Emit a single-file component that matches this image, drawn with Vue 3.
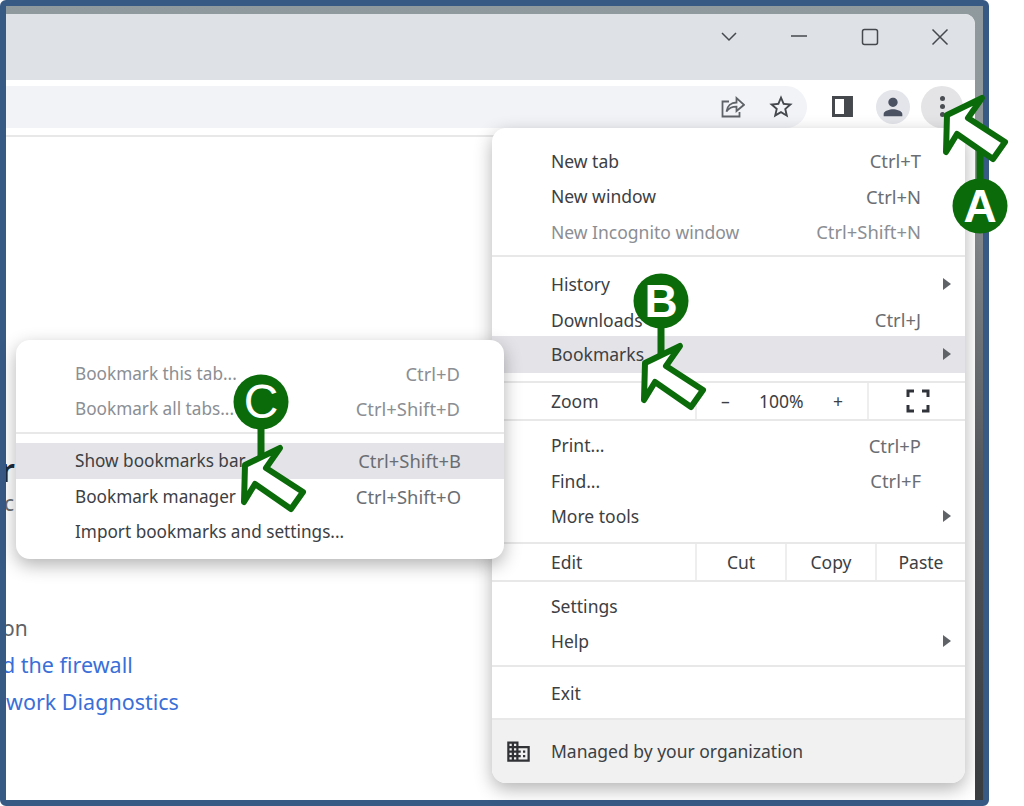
<script setup>
const mainTop = [
  { label: 'New tab', keys: 'Ctrl+T' },
  { label: 'New window', keys: 'Ctrl+N' },
  { label: 'New Incognito window', keys: 'Ctrl+Shift+N', off: true }
]
const mainHistory = [
  { label: 'History', more: true },
  { label: 'Downloads', keys: 'Ctrl+J' },
  { label: 'Bookmarks', more: true, active: true }
]
const mainTools = [
  { label: 'Print...', keys: 'Ctrl+P' },
  { label: 'Find...', keys: 'Ctrl+F' },
  { label: 'More tools', more: true }
]
const mainHelp = [
  { label: 'Settings' },
  { label: 'Help', more: true }
]
const subTop = [
  { label: 'Bookmark this tab...', keys: 'Ctrl+D', off: true },
  { label: 'Bookmark all tabs...', keys: 'Ctrl+Shift+D', off: true }
]
const subBottom = [
  { label: 'Show bookmarks bar', keys: 'Ctrl+Shift+B', active: true },
  { label: 'Bookmark manager', keys: 'Ctrl+Shift+O' },
  { label: 'Import bookmarks and settings...' }
]

// Each callout: badge centre, arrow tip, and the connector line
const callouts = [
  { letter: 'A', cx: 980, cy: 206, tip: [947, 115], line: [980, 150, 980, 182], bold: true },
  { letter: 'B', cx: 661, cy: 301, tip: [645, 363], line: [661, 325, 661, 358], bold: true },
  { letter: 'C', cx: 261, cy: 402, tip: [245, 465], line: [261, 425, 261, 460], bold: false }
]
const arrowShape = '0,0 35,-17 21,3 58,27 46,44 10,19 -1,37'
</script>

<template>
  <div class="page">
    <div class="frame">
      <div class="window">
        <div class="titlebar">
          <svg class="win-icon" viewBox="0 0 20 20"><path d="M3 6l7 7 7-7" /></svg>
          <svg class="win-icon" viewBox="0 0 20 20"><path d="M2 9h16" /></svg>
          <svg class="win-icon" viewBox="0 0 20 20"><rect x="2.5" y="2.5" width="15" height="15" rx="2" /></svg>
          <svg class="win-icon" viewBox="0 0 20 20"><path d="M2.5 2.5l15 15M17.5 2.5l-15 15" /></svg>
        </div>

        <div class="toolbar">
          <div class="omnibox">
            <svg class="share" viewBox="0 0 24 24">
              <path d="M8 6.5H1.5v15h17V17" />
              <path d="M5.5 16.5c.6-5.500 4.600-9 10-9V3l7.500 6.800-7.500 6.200v-4.300c-4.500 0-7.500 1.200-10 4.800z" />
            </svg>
            <svg class="star" viewBox="0 0 24 24">
              <path d="M22 9.240l-7.190-.62L12 2 9.190 8.630 2 9.240l5.460 4.730L5.820 21 12 17.270 18.180 21l-1.630-7.030L22 9.240zM12 15.400l-3.760 2.270 1-4.280-3.320-2.880 4.380-.38L12 6.100l1.710 4.040 4.380.38-3.320 2.880 1 4.280L12 15.400z" />
            </svg>
          </div>
          <svg class="panel" viewBox="0 0 21 21">
            <path fill-rule="evenodd" d="M0 0h21v21H0zM3 3v15h9V3z" />
          </svg>
          <div class="avatar">
            <svg viewBox="0 0 24 24">
              <path d="M12 12c2.210 0 4-1.790 4-4s-1.790-4-4-4-4 1.790-4 4 1.790 4 4 4zm0 2c-2.670 0-8 1.340-8 4v2h16v-2c0-2.660-5.330-4-8-4z" />
            </svg>
          </div>
          <div class="dots"><i></i><i></i><i></i></div>
        </div>

        <div class="content">
          <div class="heading">r</div>
          <div class="sub-line">c</div>
          <div class="try">on</div>
          <a class="link first">d the firewall</a>
          <a class="link">work Diagnostics</a>
        </div>
      </div>
    </div>

    <!-- Chrome main menu -->
    <div class="menu main-menu">
      <div class="section top">
        <div v-for="row in mainTop" :key="row.label" class="row" :class="{ off: row.off }">
          <span>{{ row.label }}</span><span class="keys">{{ row.keys }}</span>
        </div>
      </div>
      <div class="section hist">
        <div v-for="row in mainHistory" :key="row.label" class="row" :class="{ active: row.active }">
          <span>{{ row.label }}</span>
          <span v-if="row.keys" class="keys">{{ row.keys }}</span>
          <i v-if="row.more" class="caret"></i>
        </div>
      </div>
      <div class="section cells zoom">
        <span class="cell-label">Zoom</span>
        <div class="zoom-ctl"><span>–</span><span class="pct">100%</span><span>+</span></div>
        <div class="full">
          <svg viewBox="0 0 24 24"><path d="M2 8V2h6M16 2h6v6M22 16v6h-6M8 22H2v-6" /></svg>
        </div>
      </div>
      <div class="section tools">
        <div v-for="row in mainTools" :key="row.label" class="row">
          <span>{{ row.label }}</span>
          <span v-if="row.keys" class="keys">{{ row.keys }}</span>
          <i v-if="row.more" class="caret"></i>
        </div>
      </div>
      <div class="section cells edit">
        <span class="cell-label">Edit</span>
        <div class="edit-btn">Cut</div>
        <div class="edit-btn">Copy</div>
        <div class="edit-btn">Paste</div>
      </div>
      <div class="section help">
        <div v-for="row in mainHelp" :key="row.label" class="row">
          <span>{{ row.label }}</span>
          <i v-if="row.more" class="caret"></i>
        </div>
      </div>
      <div class="section exit">
        <div class="row"><span>Exit</span></div>
      </div>
      <div class="managed">
        <svg viewBox="0 0 24 24">
          <path d="M12 7V3H2v18h20V7H12zM6 19H4v-2h2v2zm0-4H4v-2h2v2zm0-4H4V9h2v2zm0-4H4V5h2v2zm4 12H8v-2h2v2zm0-4H8v-2h2v2zm0-4H8V9h2v2zm0-4H8V5h2v2zm10 12h-8v-2h2v-2h-2v-2h2v-2h-2V9h8v10zm-2-8h-2v2h2v-2zm0 4h-2v2h2v-2z" />
        </svg>
        <span>Managed by your organization</span>
      </div>
    </div>

    <!-- Bookmarks submenu -->
    <div class="menu sub-menu">
      <div class="section sub-top">
        <div v-for="row in subTop" :key="row.label" class="row off">
          <span>{{ row.label }}</span><span class="keys">{{ row.keys }}</span>
        </div>
      </div>
      <div class="sub-bottom">
        <div v-for="row in subBottom" :key="row.label" class="row" :class="{ active: row.active }">
          <span>{{ row.label }}</span>
          <span v-if="row.keys" class="keys">{{ row.keys }}</span>
        </div>
      </div>
    </div>

    <!-- Green step callouts drawn over the screenshot -->
    <svg class="callouts" viewBox="0 0 1024 806">
      <g v-for="c in callouts" :key="c.letter">
        <line :x1="c.line[0]" :y1="c.line[1]" :x2="c.line[2]" :y2="c.line[3]" class="stem" />
        <polygon :points="arrowShape" :transform="`translate(${c.tip[0]} ${c.tip[1]})`" class="arrow" />
        <circle :cx="c.cx" :cy="c.cy" r="27.500" class="badge" />
        <text :x="c.cx" :y="c.cy + 16" class="letter" :class="{ thin: !c.bold }">{{ c.letter }}</text>
      </g>
    </svg>
  </div>
</template>

<style scoped>
.page {
  position: relative;
  width: 1024px;
  height: 806px;
  overflow: hidden;
  background: #fff;
  font-family: "Noto Sans", "Open Sans", sans-serif;
  color: #3c4043;
}

.frame {
  box-sizing: border-box;
  width: 989px;
  height: 806px;
  padding: 8px 8px 0 0;
  border: 6px solid #375a85;
  border-radius: 6px;
  background: linear-gradient(#8f9a9e, #8f9598 20%, #53575b 60%, #3a3d40);
}

.window {
  display: flex;
  flex-direction: column;
  height: 100%;
  background: #fff;
  border-top-right-radius: 10px;
  overflow: hidden;
}

.titlebar {
  display: flex;
  align-items: center;
  justify-content: flex-end;
  gap: 50.500px;
  height: 66px;
  flex: none;
  padding: 0 25px 21px 0;
  box-sizing: border-box;
  background: #dee1e6;
}

.win-icon {
  width: 20px;
  height: 20px;
  fill: none;
  stroke: #45484d;
  stroke-width: 1.500;
}

.toolbar {
  display: flex;
  align-items: center;
  flex: none;
  height: 57px;
  box-sizing: border-box;
  padding: 0 12px 2px 0;
  border-bottom: 2px solid #e8e8e8;
}

.omnibox {
  display: flex;
  align-items: center;
  justify-content: flex-end;
  gap: 22px;
  width: 802px;
  height: 42px;
  box-sizing: border-box;
  padding-right: 12px;
  background: #f2f3f7;
  border-radius: 0 21px 21px 0;
}

.share {
  width: 24px;
  height: 24px;
  fill: none;
  stroke: #5f6368;
  stroke-width: 1.800;
}

.star {
  width: 28px;
  height: 28px;
  fill: #45484d;
}

.panel {
  width: 21px;
  height: 21px;
  margin-left: 25px;
  fill: #45484d;
}

.avatar {
  display: flex;
  align-items: center;
  justify-content: center;
  width: 34px;
  height: 34px;
  margin-left: 23px;
  border-radius: 50%;
  background: #e3e5ea;
}

.avatar svg {
  width: 28px;
  height: 28px;
  fill: #4b5262;
}

.dots {
  display: flex;
  flex-direction: column;
  align-items: center;
  justify-content: center;
  gap: 3px;
  width: 42px;
  height: 42px;
  margin-left: 11px;
  border-radius: 50%;
  background: #e4e4e6;
}

.dots i {
  width: 5px;
  height: 5px;
  border-radius: 50%;
  background: #4a4d52;
}

.content {
  display: flex;
  flex-direction: column;
  align-items: flex-start;
  flex: 1;
  padding-top: 314px;
  font-size: 21.500px;
  line-height: 37px;
  white-space: nowrap;
}

.heading {
  height: 37px;
  margin-left: -5px;
  font-size: 32px;
  font-weight: 600;
  color: #1c2a3d;
}

.sub-line {
  margin-left: -2px;
  margin-top: -3px;
  font-size: 21px;
  color: #6a6d72;
}

.try {
  margin-top: 88px;
  margin-left: -4px;
  font-size: 21px;
  color: #5f6368;
}

.link {
  color: #3a6fd8;
}

.first {
  margin-top: -1px;
  margin-left: -4px;
}

.menu {
  position: absolute;
  box-sizing: border-box;
  display: flex;
  flex-direction: column;
  background: #fff;
  border-radius: 14px;
  box-shadow: 0 6px 18px rgba(0, 0, 0, 0.3);
  font-size: 17.500px;
}

.main-menu {
  left: 492px;
  top: 128px;
  width: 473px;
  height: 655px;
}

.sub-menu {
  left: 16px;
  top: 340px;
  width: 488px;
  height: 219px;
  font-size: 17.200px;
}

.row {
  display: flex;
  align-items: center;
  justify-content: space-between;
  position: relative;
  height: 35.500px;
  padding: 0 44px 0 59px;
}

.row.active {
  background: #e4e4e8;
}

.row.off,
.row.off .keys {
  color: #8b8e93;
}

.keys {
  font-size: 18.400px;
  color: #6a6d72;
}

.caret {
  position: absolute;
  right: 14px;
  top: 50%;
  margin-top: -6px;
  border-left: 8px solid #5f6368;
  border-top: 6px solid transparent;
  border-bottom: 6px solid transparent;
}

.section {
  box-sizing: border-box;
  border-bottom: 2px solid #e8e8e8;
}

.top {
  height: 128.500px;
  padding-top: 15px;
}

.hist {
  height: 126px;
  padding-top: 10px;
}

.hist .active {
  height: 37px;
  margin-top: -2px;
}

.cells {
  display: flex;
  align-items: stretch;
  flex: none;
}

.cell-label {
  display: flex;
  align-items: center;
  width: 205px;
  box-sizing: border-box;
  padding-left: 59px;
  border-right: 2px solid #eee;
}

.zoom {
  height: 38px;
}

.zoom-ctl {
  display: flex;
  align-items: center;
  justify-content: space-between;
  width: 172px;
  box-sizing: border-box;
  padding: 0 24px 0 24px;
  border-right: 2px solid #eee;
}

.pct {
  font-size: 17.500px;
}

.full {
  display: flex;
  flex: 1;
  align-items: center;
  justify-content: center;
  padding-left: 2px;
}

.full svg {
  width: 24px;
  height: 24px;
  fill: none;
  stroke: #30343a;
  stroke-width: 3;
}

.tools {
  height: 123px;
  padding-top: 7px;
}

.edit {
  height: 38px;
}

.edit-btn {
  display: flex;
  flex: 1;
  align-items: center;
  justify-content: center;
  border-right: 2px solid #eee;
}

.edit-btn:last-child {
  border-right: 0;
}

.help {
  height: 85px;
  padding-top: 7px;
}

.help .row {
  height: 35px;
}

.exit {
  height: 53px;
  padding-top: 9px;
}

.managed {
  display: flex;
  flex: 1;
  align-items: center;
  gap: 19px;
  padding-left: 13px;
  background: #f1f1f1;
  border-radius: 0 0 14px 14px;
}

.managed svg {
  width: 27px;
  height: 27px;
  fill: #303236;
}

.sub-top {
  height: 94px;
  padding-top: 15.500px;
}

.sub-top .row {
  height: 35px;
}

.sub-bottom {
  padding-top: 9px;
}

.sub-bottom .row {
  padding-right: 43px;
}

.callouts {
  position: absolute;
  left: 0;
  top: 0;
  width: 1024px;
  height: 806px;
  pointer-events: none;
}

.stem {
  stroke: #0b6b0b;
  stroke-width: 7;
}

.arrow {
  fill: #fff;
  stroke: #0b6b0b;
  stroke-width: 6;
  stroke-linejoin: round;
}

.badge {
  fill: #0b6b0b;
}

.letter {
  fill: #fff;
  font-family: "Liberation Sans", sans-serif;
  font-size: 46px;
  font-weight: 700;
  text-anchor: middle;
}

.letter.thin {
  font-weight: 400;
  font-size: 48px;
}
</style>
